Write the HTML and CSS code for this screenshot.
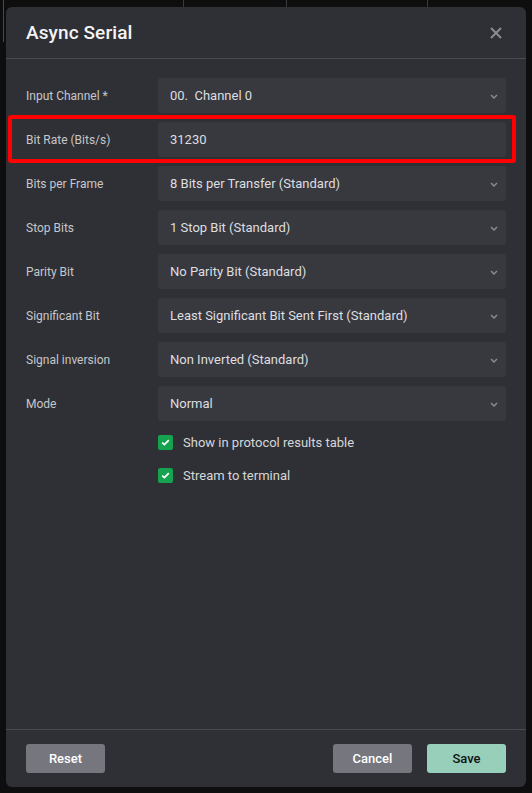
FILE: index.html
```html
<!DOCTYPE html>
<html>
<head>
<meta charset="utf-8">
<link rel="stylesheet" href="styles.css">
</head>
<body>
<div class="backdrop">
  <div class="bg-cell c1"></div>
  <div class="bg-cell c2"></div>
  <div class="bg-cell c3"></div>
  <div class="bg-cell c4"></div>
</div>
<div class="modal">
  <div class="modal-header">
    <h1 class="title">Async Serial</h1>
    <svg class="close" width="12" height="12" viewBox="0 0 12 12"><path d="M1 1L11 11M11 1L1 11" stroke="#8a8b90" stroke-width="2" fill="none"/></svg>
  </div>
  <div class="modal-body">
    <div class="row"><div class="label">Input Channel *</div><div class="field select"><span>00.&nbsp; Channel 0</span><svg class="chev" width="8" height="5" viewBox="0 0 8 5"><path d="M1 1L4 4L7 1" stroke="#8e8f94" stroke-width="1.4" fill="none"/></svg></div></div>
    <div class="row highlighted"><div class="label">Bit Rate (Bits/s)</div><div class="field"><span>31230</span></div></div>
    <div class="row"><div class="label">Bits per Frame</div><div class="field select"><span>8 Bits per Transfer (Standard)</span><svg class="chev" width="8" height="5" viewBox="0 0 8 5"><path d="M1 1L4 4L7 1" stroke="#8e8f94" stroke-width="1.4" fill="none"/></svg></div></div>
    <div class="row"><div class="label">Stop Bits</div><div class="field select"><span>1 Stop Bit (Standard)</span><svg class="chev" width="8" height="5" viewBox="0 0 8 5"><path d="M1 1L4 4L7 1" stroke="#8e8f94" stroke-width="1.4" fill="none"/></svg></div></div>
    <div class="row"><div class="label">Parity Bit</div><div class="field select"><span>No Parity Bit (Standard)</span><svg class="chev" width="8" height="5" viewBox="0 0 8 5"><path d="M1 1L4 4L7 1" stroke="#8e8f94" stroke-width="1.4" fill="none"/></svg></div></div>
    <div class="row"><div class="label">Significant Bit</div><div class="field select"><span>Least Significant Bit Sent First (Standard)</span><svg class="chev" width="8" height="5" viewBox="0 0 8 5"><path d="M1 1L4 4L7 1" stroke="#8e8f94" stroke-width="1.4" fill="none"/></svg></div></div>
    <div class="row"><div class="label">Signal inversion</div><div class="field select"><span>Non Inverted (Standard)</span><svg class="chev" width="8" height="5" viewBox="0 0 8 5"><path d="M1 1L4 4L7 1" stroke="#8e8f94" stroke-width="1.4" fill="none"/></svg></div></div>
    <div class="row"><div class="label">Mode</div><div class="field select"><span>Normal</span><svg class="chev" width="8" height="5" viewBox="0 0 8 5"><path d="M1 1L4 4L7 1" stroke="#8e8f94" stroke-width="1.4" fill="none"/></svg></div></div>
    <div class="checks">
      <label class="check"><span class="box"><svg width="9" height="7" viewBox="0 0 9 7"><path d="M1.2 3.6L3.4 5.6L7.8 1.2" stroke="#fff" stroke-width="1.8" fill="none"/></svg></span>Show in protocol results table</label>
      <label class="check"><span class="box"><svg width="9" height="7" viewBox="0 0 9 7"><path d="M1.2 3.6L3.4 5.6L7.8 1.2" stroke="#fff" stroke-width="1.8" fill="none"/></svg></span>Stream to terminal</label>
    </div>
  </div>
  <div class="modal-footer">
    <button class="btn grey">Reset</button>
    <div class="right">
      <button class="btn grey">Cancel</button>
      <button class="btn save">Save</button>
    </div>
  </div>
</div>
</body>
</html>
```
FILE: styles.css
```css
* { box-sizing: border-box; }
html, body { margin: 0; padding: 0; }
body {
  width: 532px;
  height: 793px;
  background: #0e0e0f;
  font-family: Roboto, "Noto Sans", sans-serif;
  position: relative;
  overflow: hidden;
}
.backdrop {
  display: flex;
  height: 60px;
}
.bg-cell { border-right: 1px solid #3a3a3e; height: 7px; }
.c1 { width: 4px; height: 42px; border-right-color: #4a4a4e; }
.c2 { width: 180px; }
.c3 { width: 103px; }
.c4 { width: 141px; }
.modal {
  position: absolute;
  left: 6px;
  top: 7px;
  width: 520px;
  height: 780px;
  background: #2f3035;
  border-radius: 6px;
  display: flex;
  flex-direction: column;
}
.modal-header {
  height: 52px;
  border-bottom: 1px solid #4a4b50;
  display: flex;
  align-items: center;
  justify-content: space-between;
  padding: 0 24px 0 20px;
}
.title {
  margin: 0;
  font-size: 19px;
  font-weight: 500;
  color: #f4f4f5;
  letter-spacing: 0.1px;
}
.modal-body {
  flex: 1;
  padding: 19px 20px 0 20px;
}
.row {
  display: flex;
  align-items: center;
  height: 35px;
  margin-bottom: 9px;
  position: relative;
}
.label {
  width: 132px;
  font-size: 12px;
  color: #c6c7cb;
}
.field {
  flex: 1;
  height: 35px;
  background: #38393e;
  border-radius: 3px;
  display: flex;
  align-items: center;
  justify-content: space-between;
  padding: 0 8px 0 12px;
  font-size: 13px;
  color: #dedee0;
}
.chev { margin-top: 1px; }
.highlighted::after {
  content: "";
  position: absolute;
  left: -18px;
  right: -10px;
  top: -7px;
  bottom: -6px;
  border: 4px solid #ff0000;
  border-radius: 3px;
}
.checks {
  padding-left: 132px;
  padding-top: 5px;
  display: flex;
  flex-direction: column;
  gap: 18px;
}
.check {
  display: flex;
  align-items: center;
  font-size: 13px;
  color: #d6d7d9;
  height: 15px;
}
.box {
  width: 15px;
  height: 15px;
  background: #16a34f;
  border-radius: 2px;
  display: flex;
  align-items: center;
  justify-content: center;
  margin-right: 10px;
}
.modal-footer {
  height: 58px;
  border-top: 1px solid #4a4b50;
  display: flex;
  justify-content: space-between;
  padding: 14px 20px 0 20px;
}
.right { display: flex; gap: 15px; }
.btn {
  width: 79px;
  height: 29px;
  border: none;
  border-radius: 3px;
  font-family: Roboto, "Noto Sans", sans-serif;
  font-size: 13px;
  font-weight: 500;
}
.grey { background: #76767e; color: #ffffff; }
.save { background: #97cfba; color: #111214; }
```
